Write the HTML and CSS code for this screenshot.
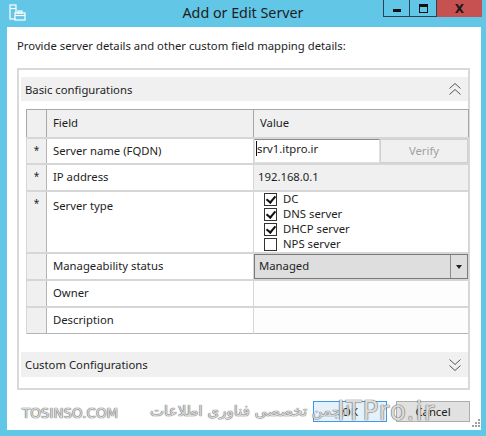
FILE: index.html
```html
<!DOCTYPE html>
<html lang="en">
<head>
  <meta charset="UTF-8">
  <title>Add or Edit Server</title>
  <link rel="stylesheet" href="styles.css">
</head>
<body>
  <div class="window">
    <div class="titlebar">
      <div class="app-icon">
        <svg width="17" height="17" viewBox="0 0 17 17" fill="none" stroke="#ffffff" stroke-width="1.2">
          <rect x="1" y="1" width="6" height="14"/>
          <line x1="1" y1="4.5" x2="7" y2="4.5"/>
          <rect x="6" y="9" width="10" height="7" fill="#62c6e7"/>
          <rect x="9" y="7" width="4" height="2"/>
          <line x1="6" y1="11.5" x2="16" y2="11.5"/>
        </svg>
      </div>
      <div class="title">Add or Edit Server</div>
      <div class="win-buttons">
        <div class="win-btn minimize"><span class="min-bar"></span></div>
        <div class="win-btn maximize"><span class="max-box"></span></div>
        <div class="win-btn close">X</div>
      </div>
    </div>

    <div class="client">
      <div class="intro">Provide server details and other custom field mapping details:</div>

      <div class="group">
        <div class="section-bar">
          <span>Basic configurations</span>
          <svg class="chevrons" width="14" height="14" viewBox="0 0 14 14" fill="none" stroke="#555" stroke-width="1">
            <polyline points="1.5,6.5 7,1.5 12.5,6.5"/>
            <polyline points="1.5,12.5 7,7.5 12.5,12.5"/>
          </svg>
        </div>

        <table class="grid">
          <colgroup>
            <col class="col-star">
            <col class="col-field">
            <col class="col-value">
          </colgroup>
          <tr class="head">
            <th class="star"></th>
            <th>Field</th>
            <th>Value</th>
          </tr>
          <tr class="row-name">
            <td class="star">*</td>
            <td class="field">Server name (FQDN)</td>
            <td class="value edit">
              <div class="name-edit">
                <div class="text-box"><span class="caret"></span>srv1.itpro.ir</div>
                <div class="verify">Verify</div>
              </div>
            </td>
          </tr>
          <tr class="row-ip">
            <td class="star">*</td>
            <td class="field">IP address</td>
            <td class="value readonly">192.168.0.1</td>
          </tr>
          <tr class="row-type">
            <td class="star">*</td>
            <td class="field top">Server type</td>
            <td class="value checks">
              <div class="check"><span class="box on"></span>DC</div>
              <div class="check"><span class="box on"></span>DNS server</div>
              <div class="check"><span class="box on"></span>DHCP server</div>
              <div class="check"><span class="box"></span>NPS server</div>
            </td>
          </tr>
          <tr class="row-std">
            <td class="star"></td>
            <td class="field">Manageability status</td>
            <td class="value combo-cell">
              <div class="combo">
                <span class="combo-text">Managed</span>
                <span class="combo-arrow"></span>
              </div>
            </td>
          </tr>
          <tr class="row-std">
            <td class="star"></td>
            <td class="field">Owner</td>
            <td class="value"></td>
          </tr>
          <tr class="row-std">
            <td class="star"></td>
            <td class="field">Description</td>
            <td class="value"></td>
          </tr>
        </table>

        <div class="section-bar custom">
          <span>Custom Configurations</span>
          <svg class="chevrons" width="14" height="14" viewBox="0 0 14 14" fill="none" stroke="#555" stroke-width="1">
            <polyline points="1.5,1.5 7,6.5 12.5,1.5"/>
            <polyline points="1.5,7.5 7,12.5 12.5,7.5"/>
          </svg>
        </div>
      </div>

      <div class="actions">
        <button class="btn default">OK</button>
        <button class="btn">Cancel</button>
      </div>

      <div class="watermark">
        <span class="wm-left">TOSINSO.COM</span>
        <span class="wm-fa" dir="rtl">انجمن تخصصی فناوری اطلاعات</span>
        <span class="wm-right">ITPro.ir</span>
      </div>

      <div class="grip">
        <svg width="10" height="10" viewBox="0 0 10 10" fill="#a0a0a0">
          <rect x="8" y="0" width="2" height="2"/>
          <rect x="5" y="3" width="2" height="2"/>
          <rect x="8" y="3" width="2" height="2"/>
          <rect x="2" y="6" width="2" height="2"/>
          <rect x="5" y="6" width="2" height="2"/>
          <rect x="8" y="6" width="2" height="2"/>
        </svg>
      </div>
    </div>
  </div>
</body>
</html>
```
FILE: styles.css
```css
body {
  margin: 0;
  background: #62c6e7;
  font-family: 'Noto Sans', 'DejaVu Sans', sans-serif;
  font-size: 11.3px;
  color: #1e1e1e;
}

.window {
  width: 486px;
  height: 436px;
  display: flex;
  flex-direction: column;
}

/* title bar */
.titlebar {
  height: 27px;
  display: grid;
  grid-template-columns: 1fr auto 1fr;
  align-items: start;
}

.app-icon {
  padding: 4px 0 0 9px;
}

.title {
  font-size: 14.3px;
  line-height: 18px;
  padding-top: 4px;
  color: #1e1e1e;
}

.win-buttons {
  justify-self: end;
  display: flex;
  margin-right: 4px;
}

.win-btn {
  height: 17px;
  display: flex;
  align-items: center;
  justify-content: center;
  box-sizing: border-box;
}

.win-btn.minimize,
.win-btn.maximize {
  width: 27px;
  border: 1px solid #2d4350;
  border-top: none;
}

.win-btn.maximize {
  border-left: none;
}

.min-bar {
  width: 8px;
  height: 3px;
  background: #111;
  margin-top: 5px;
}

.max-box {
  width: 7px;
  height: 5px;
  border: 1px solid #111;
  border-top-width: 3px;
}

.win-btn.close {
  width: 45px;
  background: #c75050;
  font-weight: bold;
  font-size: 12px;
  color: #1a1a1a;
  font-family: 'DejaVu Sans', sans-serif;
}

/* client area */
.client {
  position: relative;
  flex: 1;
  margin: 0 5px 6px 7px;
  background: #ffffff;
  padding: 11px 11px 0 10px;
}

.intro {
  line-height: 16px;
}

.group {
  margin-top: 14px;
  border: 2px solid #d9d9d9;
  padding: 7px 0 11px 2px;
}

.section-bar {
  height: 24px;
  background: #f0f0f0;
  display: flex;
  align-items: center;
  justify-content: space-between;
  padding: 0 6px 0 4px;
}

.section-bar.custom {
  height: 25px;
  margin-top: 18px;
}

.chevrons {
  display: block;
}

/* field grid */
.grid {
  margin: 8px 0 0 5px;
  width: 442px;
  border-collapse: collapse;
  table-layout: fixed;
  border: 1px solid #b4b4b4;
}

.col-star { width: 20px; }
.col-field { width: 207px; }
.col-value { width: 215px; }

.grid tr.head { height: 28px; }
.grid tr.row-name { height: 26px; }
.grid tr.row-ip { height: 27px; }
.grid tr.row-type { height: 59px; }
.grid tr.row-std { height: 27px; }

.grid th {
  background: #f0f0f0;
  border: 1px solid #a8a8a8;
  text-align: left;
  font-weight: normal;
  padding: 0 6px;
  line-height: 16px;
}

.grid td {
  border: 1px solid #d6d6d6;
  border-width: 2px 1px 0 1px;
  padding: 0 6px;
  line-height: 16px;
}

.grid td.star {
  background: #f0f0f0;
  text-align: center;
  padding: 5px 0 0 0;
  border-right-color: #b4b4b4;
  vertical-align: top;
  font-size: 10px;
  line-height: 12px;
}

.grid td.top {
  vertical-align: top;
  padding-top: 6px;
}

.grid td.value {
  padding: 0 4px;
  border-left-color: #b4b4b4;
}

.grid td.edit {
  padding: 0;
}

.name-edit {
  display: flex;
  height: 24px;
}

.text-box {
  flex: 1;
  border: 1px solid #e0e0e0;
  border-top-color: #8c8c8c;
  line-height: 16px;
  padding: 1px 0 0 1px;
  display: flex;
  align-items: flex-start;
}

.caret {
  width: 1px;
  height: 15px;
  background: #111;
}

.verify {
  width: 86px;
  background: #f0f0f0;
  border: 1px solid #d0d0d0;
  color: #a0a0a0;
  display: flex;
  align-items: center;
  justify-content: center;
  padding-top: 1px;
}

.grid td.readonly {
  background: #f0f0f0;
}

.grid td.checks {
  padding: 0 0 0 10px;
  vertical-align: top;
}

.check {
  display: flex;
  align-items: center;
  gap: 6px;
  height: 15px;
}

.box {
  width: 11px;
  height: 11px;
  border: 1px solid #333;
  background: #fff;
  position: relative;
}

.box.on::after {
  content: "";
  position: absolute;
  left: 3px;
  top: 0px;
  width: 4px;
  height: 7px;
  border: solid #111;
  border-width: 0 2px 2px 0;
  transform: rotate(40deg);
}

.grid td.combo-cell {
  padding: 0;
}

.combo {
  display: flex;
  height: 25px;
  border: 1px solid #7a7a7a;
  background: #dedede;
  box-sizing: border-box;
}

.combo-text {
  flex: 1;
  padding: 3px 0 0 4px;
}

.combo-arrow {
  width: 16px;
  border-left: 1px solid #8c8c8c;
  position: relative;
}

.combo-arrow::after {
  content: "";
  position: absolute;
  left: 5px;
  top: 10px;
  border-left: 3px solid transparent;
  border-right: 3px solid transparent;
  border-top: 4px solid #222;
}

.row-std td.value {
  background: #fdfdfd;
}

/* buttons */
.actions {
  display: flex;
  justify-content: flex-end;
  gap: 9px;
  margin-top: 11px;
}

.btn {
  width: 74px;
  height: 21px;
  background: #e1e1e1;
  border: 1px solid #adadad;
  font-family: inherit;
  font-size: 11.3px;
  color: #1e1e1e;
  padding: 0;
}

.btn.default {
  border-color: #3c9ae6;
  background: #e5f1fb;
}

/* watermark over the bottom */
.watermark {
  position: absolute;
  left: 15px;
  top: 374px;
  width: 440px;
  height: 24px;
  font-family: 'DejaVu Sans', sans-serif;
  color: #dadada;
  text-shadow: 0 0 1px #555, 0 0 1px #555;
  pointer-events: none;
}

.wm-left {
  position: absolute;
  left: 0;
  top: 4px;
  font-size: 13.5px;
}

.wm-fa {
  position: absolute;
  left: 128px;
  top: 1px;
  font-size: 15px;
  letter-spacing: 1px;
}

.wm-right {
  position: absolute;
  left: 315px;
  top: -5px;
  font-size: 26px;
  letter-spacing: 1px;
}

.grip {
  position: absolute;
  right: 1px;
  bottom: 1px;
  line-height: 0;
}
```
